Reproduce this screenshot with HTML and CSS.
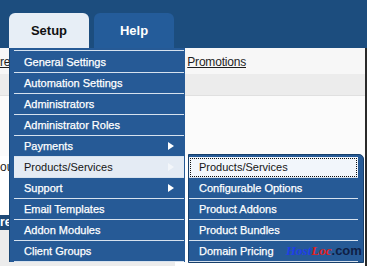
FILE: index.html
```html
<!DOCTYPE html>
<html lang="en">
<head>
  <meta charset="UTF-8">
  <meta name="viewport" content="width=device-width, initial-scale=1.0">
  <title>Setup Menu</title>
  <link rel="stylesheet" href="styles.css">
</head>
<body>
  <div class="page">
    <header class="topbar">
      <nav class="tabs">
        <a class="tab tab-active" href="#">Setup</a>
        <a class="tab" href="#">Help</a>
      </nav>
    </header>

    <main class="content">
      <div class="subnav">
        <a href="#" class="subnav-link">re</a>
        <a href="#" class="subnav-link promo">Promotions</a>
      </div>
      <div class="band"></div>
      <div class="blank"></div>
      <div class="row-text">ou</div>
      <div class="blank-short"></div>
      <div class="row-head">re</div>
      <div class="row-gray"></div>
    </main>

    <ul class="menu">
      <li class="menu-item">General Settings</li>
      <li class="menu-item">Automation Settings</li>
      <li class="menu-item">Administrators</li>
      <li class="menu-item">Administrator Roles</li>
      <li class="menu-item">Payments <span class="arrow"></span></li>
      <li class="menu-item hover">Products/Services <span class="arrow"></span></li>
      <li class="menu-item">Support <span class="arrow"></span></li>
      <li class="menu-item">Email Templates</li>
      <li class="menu-item">Addon Modules</li>
      <li class="menu-item">Client Groups</li>
    </ul>

    <ul class="menu submenu">
      <li class="menu-item focus">Products/Services</li>
      <li class="menu-item">Configurable Options</li>
      <li class="menu-item">Product Addons</li>
      <li class="menu-item">Product Bundles</li>
      <li class="menu-item">Domain Pricing</li>
    </ul>

    <div class="watermark"><span class="wm-host">Host</span><span class="wm-loc">Loc</span><span class="wm-com">.com</span></div>
  </div>
</body>
</html>
```

FILE: styles.css
```css
* {
  box-sizing: border-box;
  margin: 0;
  padding: 0;
}

body {
  background: #ffffff;
  font-family: 'Liberation Sans', Arial, sans-serif;
  color: #1a1a1a;
  overflow: hidden;
}

.page {
  position: relative;
  width: 367px;
  height: 266px;
  overflow: hidden;
}

/* top navigation */
.topbar {
  height: 48px;
  background: #1c4d7e;
  padding: 13px 0 0 9px;
}

.tabs {
  display: flex;
  gap: 5px;
  height: 100%;
}

.tab {
  display: flex;
  align-items: center;
  justify-content: center;
  width: 80px;
  height: 100%;
  border-radius: 6px 6px 0 0;
  background: #245c9a;
  color: #ffffff;
  font-size: 13px;
  font-weight: bold;
  text-decoration: none;
}

.tab-active {
  background: #e7eef6;
  color: #111111;
}

/* page behind the menus */
.content {
  height: 218px;
  background: #ffffff;
  border-right: 2px solid #2a2a2a;
}

.subnav {
  display: flex;
  align-items: center;
  height: 26px;
  background: #f7f7f7;
  padding-top: 2px;
}

.subnav-link {
  color: #1e1e1e;
  font-size: 12px;
  letter-spacing: -0.2px;
}

.promo {
  margin-left: 177px;
}

.band {
  height: 22px;
  background: #ececec;
  border-bottom: 1px solid #e0e0e0;
}

.blank {
  height: 60px;
  background: #fbfbfb;
}

.row-text {
  height: 22px;
  line-height: 22px;
  font-size: 12px;
  color: #222222;
}

.blank-short {
  height: 37px;
}

.row-head {
  width: 175px;
  height: 15px;
  line-height: 15px;
  background: #1f4a78;
  color: #ffffff;
  font-size: 12px;
  font-weight: bold;
}

.row-gray {
  width: 175px;
  height: 40px;
  background: #ececec;
}

/* dropdown menus */
.menu {
  position: absolute;
  left: 9px;
  top: 48px;
  width: 176px;
  padding: 2px 1px 0 4px;
  list-style: none;
  background: #265a96;
  border-left: 1px solid #1a4673;
}

.menu-item {
  display: flex;
  align-items: center;
  justify-content: space-between;
  height: 21px;
  padding: 0 10px 0 10px;
  border-bottom: 1px solid #d6e2ef;
  color: #ffffff;
  font-size: 11px;
  -webkit-text-stroke: 0.25px #ffffff;
}

.menu-item:first-child {
  height: 23px;
  border-top: 1px solid #d6e2ef;
}

.arrow {
  width: 0;
  height: 0;
  border-left: 6px solid #ffffff;
  border-top: 4px solid transparent;
  border-bottom: 4px solid transparent;
}

.hover {
  background: #e4ebf4;
  color: #151515;
  -webkit-text-stroke: 0;
}

.hover .arrow {
  border-left-color: #f3f6fa;
}

.submenu {
  left: 188px;
  top: 154px;
  width: 176px;
  padding: 2px 5px 0 0;
  border: 1px solid #173f6a;
  border-radius: 0 5px 0 0;
}

.submenu .menu-item:first-child {
  height: 21px;
  border-top: none;
}

.focus {
  background: #f2f6fb;
  color: #151515;
  outline: 1px dotted #111111;
  outline-offset: -2px;
  -webkit-text-stroke: 0;
}

/* watermark overlay */
.watermark {
  position: absolute;
  left: 286px;
  top: 243px;
  font-size: 13px;
  font-weight: bold;
}

.wm-host,
.wm-loc {
  font-family: 'Liberation Serif', serif;
  font-style: italic;
}

.wm-host {
  color: #1f3fe6;
}

.wm-loc {
  color: #e0201c;
}

.wm-com {
  color: #0f1f45;
  font-family: 'Liberation Sans', sans-serif;
}
```
